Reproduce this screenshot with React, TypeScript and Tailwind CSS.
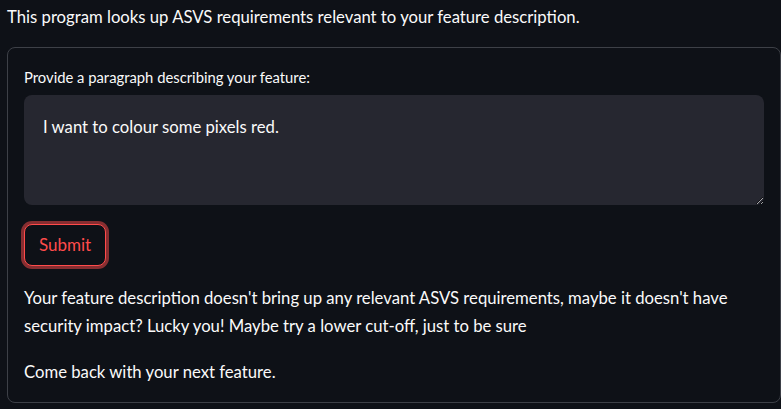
export default function App() {
  return (
    <div className="min-h-screen bg-[#0e1117] pl-[7px] pt-[4px] text-[#fafafa] font-['Lato','Liberation_Sans',sans-serif]">
      <p className="text-[16.7px] leading-[26px]">
        This program looks up ASVS requirements relevant to your feature description.
      </p>

      <form
        className="mt-[17px] h-[356px] rounded-[8px] border border-[#3d4047] px-[16px] pt-[19px]"
        onSubmit={(e) => e.preventDefault()}
      >
        <label className="block text-[14.8px] leading-[20px]">
          Provide a paragraph describing your feature:
        </label>
        <textarea
          readOnly
          defaultValue="I want to colour some pixels red."
          className="mt-[8px] block h-[110px] w-full rounded-[8px] bg-[#262730] pl-[19px] pt-[20px] text-[16.7px] leading-[24px] text-[#fafafa] outline-none"
        />
        <button
          type="submit"
          className="mt-[19px] h-[42px] w-[82px] rounded-[8px] border border-[#ff4b4b] bg-[#0e1117] text-[17px] text-[#ff4b4b] shadow-[0_0_0_3px_rgba(255,75,75,0.5)]"
        >
          Submit
        </button>
        <p className="mt-[18px] text-[16.7px] leading-[28px]">
          Your feature description doesn't bring up any relevant ASVS requirements, maybe it doesn't have
          security impact? Lucky you! Maybe try a lower cut-off, just to be sure
        </p>
        <p className="mt-[18px] text-[16.7px] leading-[28px]">Come back with your next feature.</p>
      </form>
    </div>
  );
}
